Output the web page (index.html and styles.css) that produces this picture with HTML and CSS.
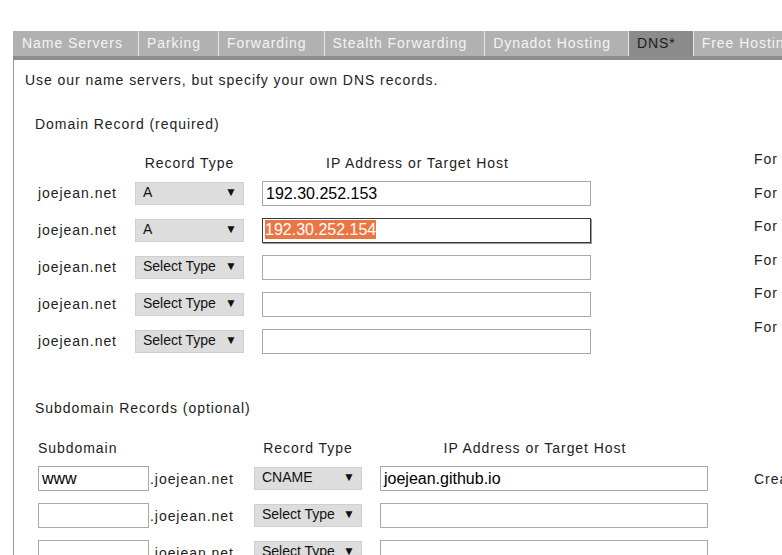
FILE: index.html
```html
<!DOCTYPE html>
<html>
<head>
<meta charset="utf-8">
<link rel="stylesheet" href="styles.css">
</head>
<body>
<div class="page">
  <div class="tabs">
    <div class="tab first">Name Servers</div>
    <div class="tab">Parking</div>
    <div class="tab">Forwarding</div>
    <div class="tab">Stealth Forwarding</div>
    <div class="tab">Dynadot Hosting</div>
    <div class="tab active">DNS*</div>
    <div class="tab">Free Hosting</div>
    <div class="tab">Email</div>
  </div>
  <div class="bar"></div>
  <div class="panel">
    <p class="intro">Use our name servers, but specify your own DNS records.</p>

    <div class="section domain">
      <div class="main">
        <h3 class="heading">Domain Record (required)</h3>
        <div class="dtable">
          <div></div>
          <div class="colhead">Record Type</div>
          <div class="colhead">IP Address or Target Host</div>

          <div class="label">joejean.net</div>
          <div class="select"><span>A</span><span class="arrow">▼</span></div>
          <div class="input">192.30.252.153</div>

          <div class="label">joejean.net</div>
          <div class="select"><span>A</span><span class="arrow">▼</span></div>
          <div class="input focused"><span class="sel">192.30.252.154</span></div>

          <div class="label">joejean.net</div>
          <div class="select"><span>Select Type</span><span class="arrow">▼</span></div>
          <div class="input"></div>

          <div class="label">joejean.net</div>
          <div class="select"><span>Select Type</span><span class="arrow">▼</span></div>
          <div class="input"></div>

          <div class="label">joejean.net</div>
          <div class="select"><span>Select Type</span><span class="arrow">▼</span></div>
          <div class="input"></div>
        </div>
      </div>
      <div class="notes">
        <div>For example, an A record points a domain to an IP address.</div>
        <div>For A records, enter an IPv4 address.</div>
        <div>For AAAA records, enter an IPv6 address.</div>
        <div>For CNAME records, enter a host name.</div>
        <div>For MX records, enter a mail server.</div>
        <div>For TXT records, enter text.</div>
      </div>
    </div>

    <div class="section sub">
      <div class="main">
        <h3 class="heading">Subdomain Records (optional)</h3>
        <div class="stable">
          <div class="colhead left">Subdomain</div>
          <div></div>
          <div class="colhead">Record Type</div>
          <div class="colhead">IP Address or Target Host</div>

          <div class="input small">www</div>
          <div class="suffix">.joejean.net</div>
          <div class="select"><span>CNAME</span><span class="arrow">▼</span></div>
          <div class="input">joejean.github.io</div>

          <div class="input small"></div>
          <div class="suffix">.joejean.net</div>
          <div class="select"><span>Select Type</span><span class="arrow">▼</span></div>
          <div class="input"></div>

          <div class="input small"></div>
          <div class="suffix">.joejean.net</div>
          <div class="select"><span>Select Type</span><span class="arrow">▼</span></div>
          <div class="input"></div>
        </div>
      </div>
      <div class="notes subnotes">
        <div>Create subdomains such as www or mail.</div>
      </div>
    </div>
  </div>
</div>
</body>
</html>
```

FILE: styles.css
```css
html, body {
  margin: 0;
  padding: 0;
  overflow: hidden;
  background: #fff;
}
body {
  font-family: "Liberation Sans", Arial, Helvetica, sans-serif;
  font-size: 14px;
  color: #222;
  letter-spacing: 0.95px;
}
.page {
  padding-top: 31px;
  padding-left: 13px;
  width: 1200px;
}
.tabs {
  display: flex;
  white-space: nowrap;
}
.tab {
  height: 25px;
  line-height: 25px;
  padding: 0 17px 0 8px;
  background: #b1b1b1;
  color: #f4f4f4;
  border-left: 1px solid #e6e6e6;
}
.tab.first {
  border-left: none;
  padding-left: 9px;
  padding-right: 15px;
}
.tab.active {
  background: #8b8b8b;
  color: #1c1c1c;
}
.bar {
  height: 4px;
  background: #8d8d8d;
}
.panel {
  border-left: 1px solid #9a9a9a;
  padding: 10px 0 40px 11px;
}
.intro {
  margin: 0;
  line-height: 20px;
}
.section {
  display: flex;
  align-items: flex-start;
}
.heading {
  margin: 0;
  font-weight: normal;
  font-size: 14px;
  line-height: 20px;
  padding-left: 10px;
}
.domain {
  margin-top: 24px;
}
.dtable {
  display: grid;
  grid-template-columns: 97px 109px 347px;
  grid-template-rows: 23px repeat(5, 37px);
  align-items: center;
  margin-top: 17.5px;
  margin-left: 13px;
}
.dtable .input {
  margin-left: 18px;
}
.dtable .colhead:last-of-type {
  padding-left: 18px;
}
.colhead {
  text-align: center;
  line-height: 23px;
}
.colhead.left {
  text-align: left;
}
.label {
  line-height: 20px;
}
.select {
  height: 23px;
  box-sizing: border-box;
  background: #dddddd;
  border: 1px solid #cfcfcf;
  display: flex;
  justify-content: space-between;
  align-items: center;
  padding: 0 6px 2px 7px;
  letter-spacing: 0;
  color: #111;
}
.arrow {
  font-size: 12px;
}
.input {
  height: 25px;
  box-sizing: border-box;
  border: 1px solid #a9a9a9;
  background: #fff;
  font-size: 16px;
  letter-spacing: 0;
  line-height: 23px;
  padding-left: 3px;
  color: #000;
  white-space: nowrap;
  overflow: hidden;
}
.input.focused {
  border: 1px solid #3a3a3a;
  box-shadow: 1px 1px 0 #9a9a9a;
  padding-top: 1px;
  line-height: 20px;
  padding-left: 2px;
}
.sel {
  background: #ea7644;
  color: #fff;
  display: inline-block;
  line-height: 19px;
}
.notes {
  margin-left: 163px;
  margin-top: 29px;
  white-space: nowrap;
}
.notes div {
  line-height: 33.6px;
}
.sub {
  margin-top: 38.5px;
}
.stable {
  display: grid;
  grid-template-columns: 111px 105px 108px 346px;
  grid-template-rows: 23px repeat(3, 37px);
  align-items: center;
  margin-top: 18.5px;
  margin-left: 13px;
}
.stable .input:not(.small) {
  margin-left: 18px;
}
.stable .colhead:last-of-type {
  padding-left: 18px;
}
.suffix {
  padding-left: 1px;
  padding-top: 2px;
}
.subnotes {
  margin-left: 46px;
  margin-top: 65px;
}
```
